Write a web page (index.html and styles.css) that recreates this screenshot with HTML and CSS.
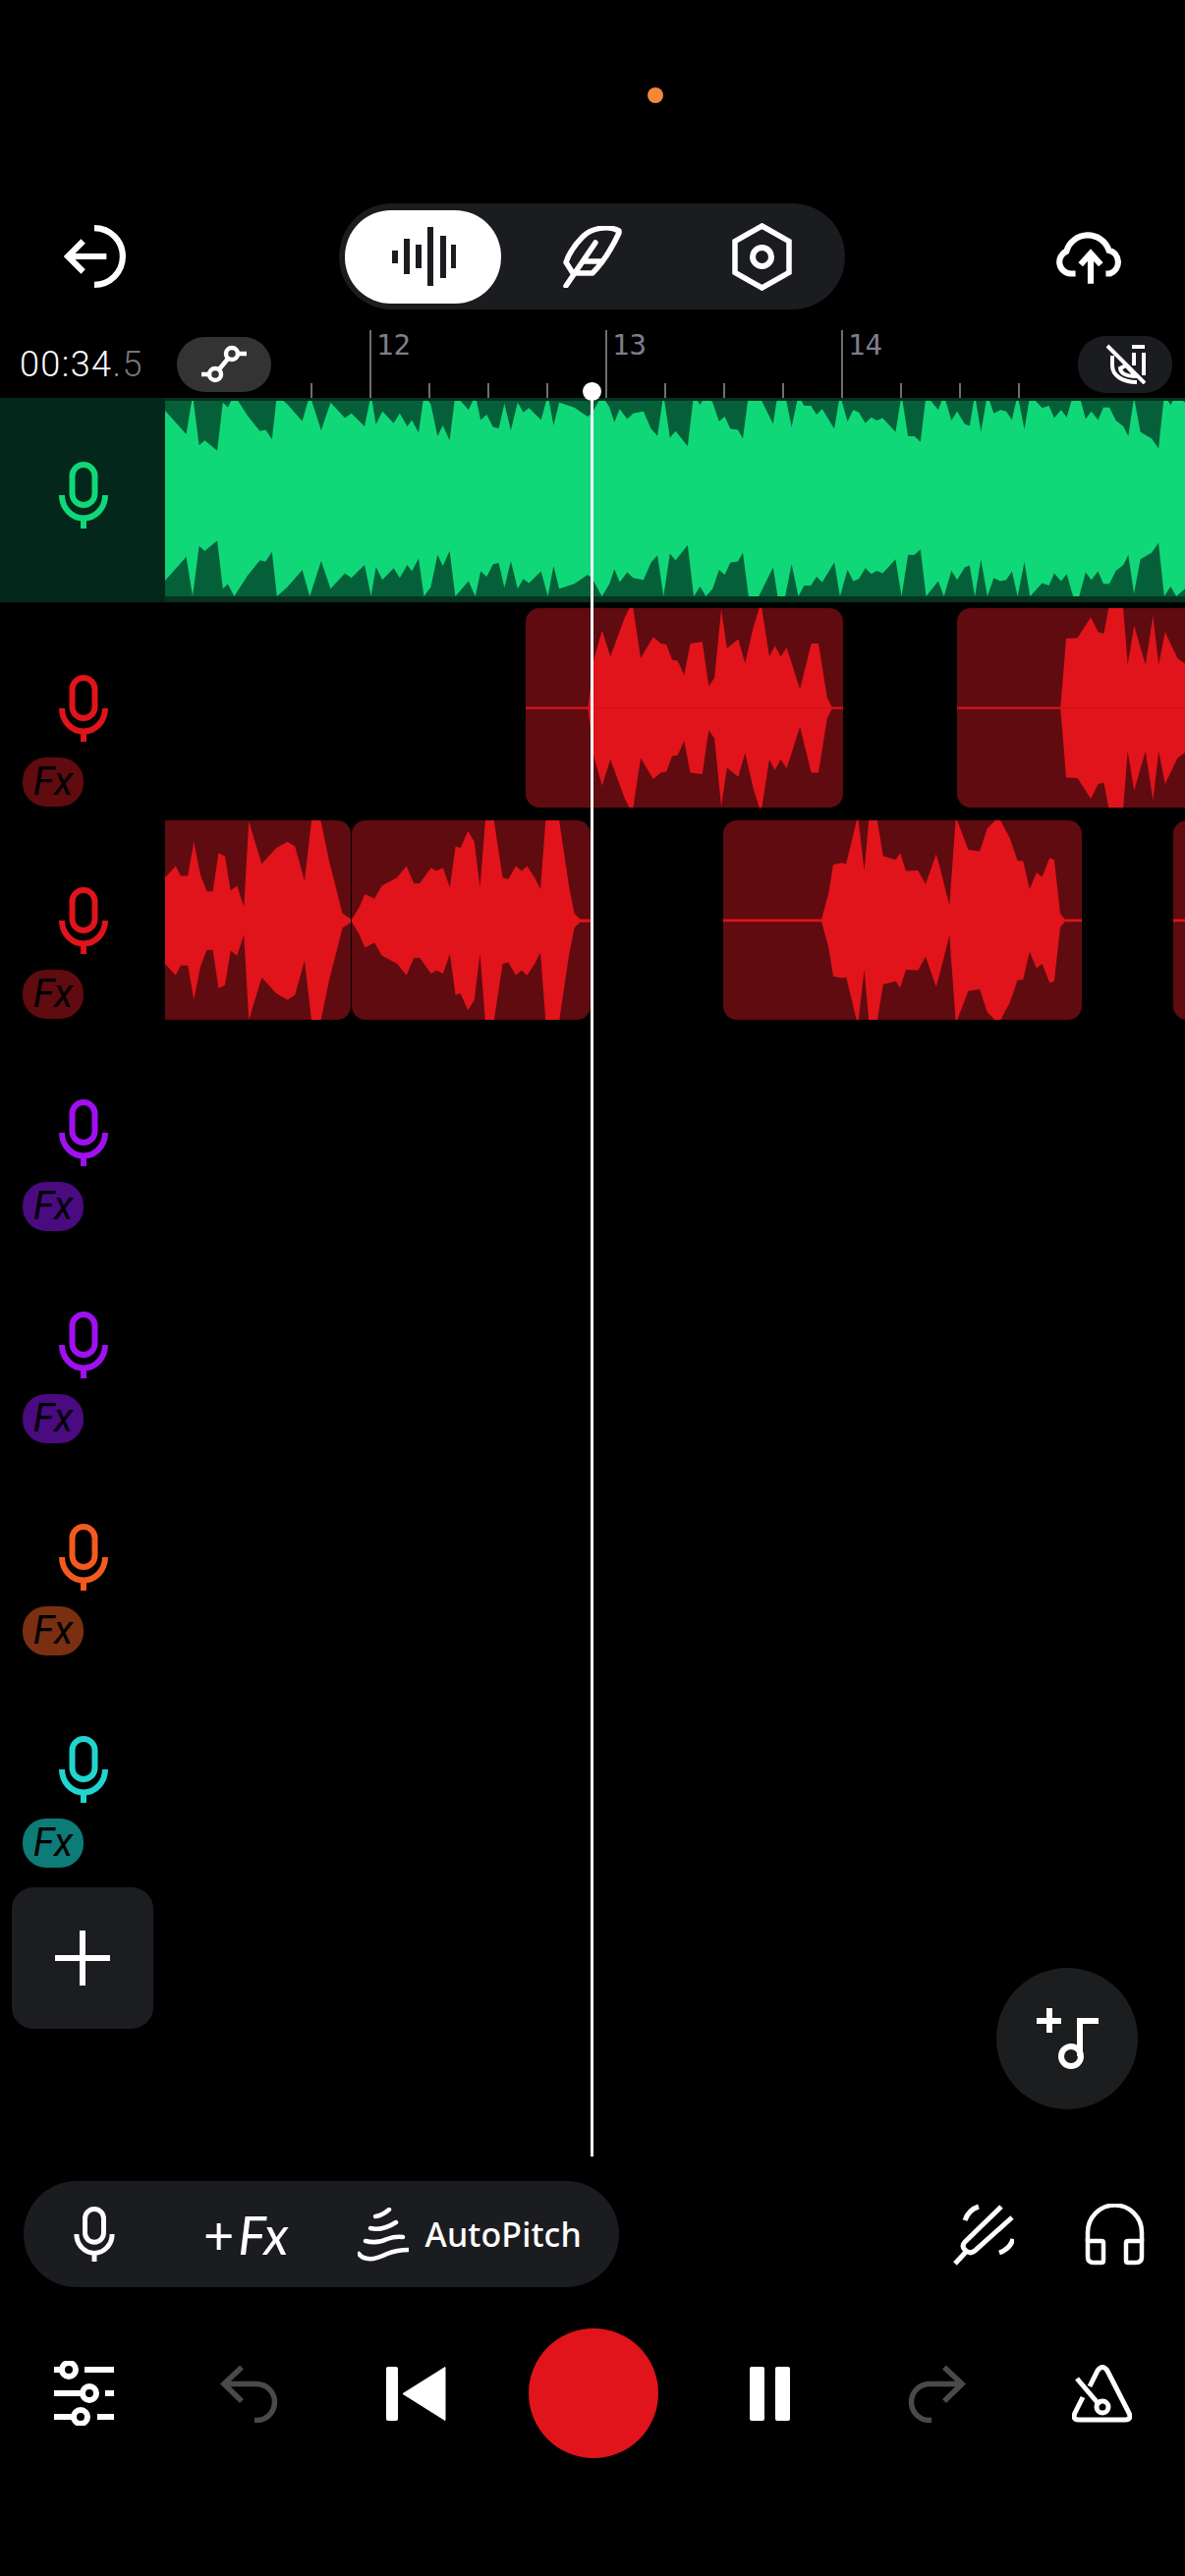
FILE: index.html
```html
<!DOCTYPE html>
<html lang="en">
<head>
    <meta charset="UTF-8">
    <meta name="viewport" content="width=device-width, initial-scale=1.0">
    <title>Recording studio</title>
    <link rel="stylesheet" href="styles.css">
</head>
<body>
    <!-- shared icons -->
    <svg class="defs" width="0" height="0">
        <symbol id="mic" viewBox="0 0 50 68">
            <rect x="13.500" y="3" width="23" height="41" rx="11.500" fill="none" stroke="currentColor" stroke-width="6"/>
            <path d="M3 34a22 23.500 0 0 0 44 0M25 58v10" fill="none" stroke="currentColor" stroke-width="6"/>
        </symbol>
        <symbol id="undo" viewBox="0 0 61 59">
            <path d="M4 19.500H37A18.500 18.500 0 0 1 37 56.500H35M22 2.500L4 19.500L22 37" fill="none" stroke="currentColor" stroke-width="5.500"/>
        </symbol>
    </svg>

    <div class="app">
        <div class="status"><span class="status-dot"></span></div>

        <div class="toolbar">
            <svg class="icon-back" viewBox="0 0 61 62">
                <path d="M30 3A28 28 0 0 1 30 59M42 31H4M19 16L4 31L19 46" fill="none" stroke="#fff" stroke-width="6"/>
            </svg>
            <div class="modes">
                <div class="mode mode-active">
                    <svg class="icon-bars" viewBox="0 0 66 60">
                        <path d="M4 24v13M16 12v36M28 18v24M40 0v60M53 9v43M64 18v24" stroke="#1b1c20" stroke-width="6"/>
                    </svg>
                </div>
                <div class="mode">
                    <svg class="icon-feather" viewBox="0 0 60 63">
                        <path d="M57 5C46-1 29 2 20 11C12 19 6 28 3 37L10 48H30C40 38 50 22 57 7ZM3 61L33 17M21 36H40" fill="none" stroke="#fff" stroke-width="5.500" stroke-linecap="round" stroke-linejoin="round"/>
                    </svg>
                </div>
                <div class="mode">
                    <svg class="icon-hex" viewBox="0 0 61 69">
                        <path d="M30.500 3L58 18.500V50.500L30.500 66L3 50.500V18.500Z" fill="none" stroke="#fff" stroke-width="5.500"/>
                        <circle cx="30.500" cy="34.500" r="9.500" fill="none" stroke="#fff" stroke-width="6"/>
                    </svg>
                </div>
            </div>
            <svg class="icon-cloud" viewBox="0 0 67 53">
                <path d="M19 43H14A11.500 11.500 0 0 1 10 21A22 22 0 0 1 52 20A12 12 0 0 1 53 43H49M34 53V23M24 34L34 23L44 34" fill="none" stroke="#fff" stroke-width="6"/>
            </svg>
        </div>

        <div class="ruler-row">
            <div class="time">00:34<span class="time-dot">.</span><span class="time-dim">5</span></div>
            <div class="chip chip-nodes">
                <svg class="icon-nodes" viewBox="0 0 46 40">
                    <circle cx="31" cy="9" r="6" fill="none" stroke="#fff" stroke-width="4.500"/>
                    <circle cx="14" cy="30" r="6" fill="none" stroke="#fff" stroke-width="4.500"/>
                    <path d="M37 9H46M0 30H8M18 25L27 14" fill="none" stroke="#fff" stroke-width="4.500"/>
                </svg>
            </div>
            <div class="ruler">
                <div class="tick"></div>
                <div class="tick tick-major"><span>12</span></div>
                <div class="tick"></div>
                <div class="tick"></div>
                <div class="tick"></div>
                <div class="tick tick-major"><span>13</span></div>
                <div class="tick"></div>
                <div class="tick"></div>
                <div class="tick"></div>
                <div class="tick tick-major"><span>14</span></div>
                <div class="tick"></div>
                <div class="tick"></div>
                <div class="tick"></div>
            </div>
            <div class="chip chip-magnet">
                <svg class="icon-magnet" viewBox="0 0 41 41">
                    <path d="M2 2L40 40M27 3H40M29 9V22M39 9V32M7 12V22C7 32 17 39 32 39M15 25C16 31 23 33 31 33L21 22Z" fill="none" stroke="#fff" stroke-width="4"/>
                </svg>
            </div>
        </div>

        <div class="timeline">
            <div class="track track-live">
                <div class="head head-live">
                    <svg class="mic mic-green"><use href="#mic"/></svg>
                </div>
                <div class="lane-live">
                    <svg class="wave" viewBox="437 40 2699 595" preserveAspectRatio="none">
                        <g id="greenWave">
                            <path d="M437 345V70L493 142L510 22L527 175L542 160L575 192L590 45L603 60L620 22L655 85L688 132L703 128L720 157L733 22L760 50L800 102L820 22L850 130L875 45L913 92L930 78L965 118L982 22L995 112L1012 72L1042 108L1058 78L1078 118L1090 98L1108 137L1122 22L1140 50L1158 148L1172 115L1190 160L1205 22L1240 68L1258 22L1272 98L1288 82L1305 120L1320 124L1335 48L1352 130L1370 45L1385 75L1400 62L1432 98L1450 22L1465 115L1480 45L1520 60L1555 88L1570 75V345Z"/>
                            <path transform="translate(1568 0)" d="M0 345V75L25 22L45 60L58 105L72 65L92 95L108 78L135 72L155 125L172 147L188 22L205 152L220 132L252 178L268 22L285 52L300 22L318 45L335 103L350 88L365 125L385 128L398 155L413 22L440 22L478 110L490 22L510 22L527 120L545 22L560 55L578 55L593 82L608 65L640 125L655 22L675 103L690 68L705 75L722 108L738 90L752 100L768 92L802 135L818 22L835 148L852 148L868 165L883 22L915 68L930 22L950 100L965 72L985 110L998 116L1012 22L1028 135L1045 22L1062 78L1080 68L1095 72L1110 98L1125 22L1143 127L1158 22L1190 62L1208 55L1222 92L1240 68L1255 90L1272 22L1288 22L1305 95L1320 72L1338 98L1352 60L1368 60L1385 100L1405 118L1418 148L1433 30L1450 135L1480 155L1498 185L1513 22L1530 52L1545 22L1568 45V345Z"/>
                        </g>
                        <use href="#greenWave" transform="matrix(1 0 0 -1 0 657)"/>
                    </svg>
                </div>
            </div>

            <div class="track">
                <div class="head">
                    <svg class="mic mic-red"><use href="#mic"/></svg>
                    <div class="fx fx-red">Fx</div>
                </div>
                <div class="lane">
                    <div class="clip" style="margin-left:367px;width:323px">
                        <svg class="wave" viewBox="-177 57 839 610" preserveAspectRatio="none">
                            <g id="clipA"><path d="M-177 363V359H-12L3 215L25 125L47 205L85 85L105 40L127 210L160 145L180 165L195 168L210 215L225 218L242 262L258 165L290 160L307 295L322 270L340 60L355 180L385 152L403 225L425 115L445 40L467 205L482 172L497 205L513 178L548 305L578 165L597 165L620 330L632 359H662V363Z"/></g>
                            <use href="#clipA" transform="matrix(1 0 0 -1 0 725)"/>
                        </svg>
                    </div>
                    <div class="clip" style="margin-left:116px;width:259px">
                        <svg class="wave" viewBox="966 57 674 610" preserveAspectRatio="none">
                            <g id="clipB"><path d="M966 363V359H1240L1255 150L1285 148L1320 85L1340 130L1355 135L1370 40L1405 40L1418 230L1435 110L1465 230L1485 80L1500 230L1517 130L1550 210L1568 225L1600 260L1640 300V363Z"/></g>
                            <use href="#clipB" transform="matrix(1 0 0 -1 0 725)"/>
                        </svg>
                    </div>
                </div>
            </div>

            <div class="track">
                <div class="head">
                    <svg class="mic mic-red"><use href="#mic"/></svg>
                    <div class="fx fx-red">Fx</div>
                </div>
                <div class="lane">
                    <div class="clip clip-cut" style="width:189px">
                        <svg class="wave" viewBox="437 705 490 610" preserveAspectRatio="none">
                            <g id="clipC"><path d="M437 1014V880L465 845L478 875L497 875L513 770L530 870L547 922L563 922L578 805L595 815L610 920L627 905L645 970L658 708L692 838L730 790L760 770L780 785L805 890L825 690L845 690L870 830L905 990L925 1005L927 1008V1014Z"/></g>
                            <use href="#clipC" transform="matrix(1 0 0 -1 0 2024)"/>
                        </svg>
                    </div>
                    <div class="clip" style="margin-left:1px;width:243px">
                        <svg class="wave" viewBox="930 705 633 610" preserveAspectRatio="none">
                            <g id="clipD"><path d="M930 1014V1008L950 970L965 930L990 945L1010 905L1050 880L1075 845L1095 898L1110 898L1140 850L1155 860L1172 850L1190 910L1205 785L1218 790L1238 738L1255 770L1270 910L1285 690L1305 690L1330 880L1345 885L1365 845L1380 860L1395 845L1415 880L1430 915L1445 690L1478 690L1505 900L1520 990L1535 1007H1563V1014Z"/></g>
                            <use href="#clipD" transform="matrix(1 0 0 -1 0 2024)"/>
                        </svg>
                    </div>
                    <div class="clip" style="margin-left:135px;width:365px">
                        <svg class="wave" viewBox="347 705 948 610" preserveAspectRatio="none">
                            <g id="clipE"><path d="M347 1013V1007H607L625 930L638 840L660 835L672 838L703 690L720 860L733 690L752 690L770 815L803 825L815 805L830 860L862 858L882 900L910 808L920 850L945 965L962 695L995 795L1025 800L1045 730L1075 695L1105 760L1125 828L1140 830L1157 915L1175 865L1190 878L1210 820L1222 825L1238 990L1250 1007H1295V1013Z"/></g>
                            <use href="#clipE" transform="matrix(1 0 0 -1 0 2022)"/>
                        </svg>
                    </div>
                    <div class="clip" style="margin-left:93px;width:60px">
                        <svg class="wave" viewBox="0 705 156 610" preserveAspectRatio="none">
                            <path d="M0 1007H156V1015H0Z"/>
                        </svg>
                    </div>
                </div>
            </div>

            <div class="track">
                <div class="head">
                    <svg class="mic mic-purple"><use href="#mic"/></svg>
                    <div class="fx fx-purple">Fx</div>
                </div>
            </div>
            <div class="track">
                <div class="head">
                    <svg class="mic mic-purple"><use href="#mic"/></svg>
                    <div class="fx fx-purple">Fx</div>
                </div>
            </div>
            <div class="track">
                <div class="head">
                    <svg class="mic mic-orange"><use href="#mic"/></svg>
                    <div class="fx fx-orange">Fx</div>
                </div>
            </div>
            <div class="track">
                <div class="head">
                    <svg class="mic mic-teal"><use href="#mic"/></svg>
                    <div class="fx fx-teal">Fx</div>
                </div>
            </div>

            <div class="add-track">
                <svg class="icon-plus" viewBox="0 0 56 56">
                    <path d="M0 28H56M28 0V56" stroke="#fff" stroke-width="6"/>
                </svg>
            </div>

            <div class="add-music">
                <svg class="icon-note" viewBox="0 0 63 62">
                    <path d="M0 13H25M13 0V25" stroke="#fff" stroke-width="6"/>
                    <path d="M63 13H44V49" fill="none" stroke="#fff" stroke-width="6"/>
                    <circle cx="35" cy="49" r="10" fill="none" stroke="#fff" stroke-width="6"/>
                </svg>
            </div>
        </div>

        <div class="input-row">
            <div class="input-pill">
                <svg class="mic mic-small"><use href="#mic"/></svg>
                <div class="add-fx"><span class="add-fx-plus">+</span>Fx</div>
                <svg class="icon-autopitch" viewBox="0 0 52 55">
                    <path d="M18 9Q25 8 32 2M13 21Q25 24 39 15M8 34Q20 37 30 32Q38 29 46 30M1 47C8 56 22 51 30 47Q40 43 52 43" fill="none" stroke="#fff" stroke-width="4.500" stroke-linecap="round"/>
                </svg>
                <span class="autopitch">AutoPitch</span>
            </div>
            <svg class="icon-fork" viewBox="0 0 62 63">
                <path d="M2 61L15 47M49 3L12 39Q8 43 12 47Q17 52 22 48L60 14M26 3Q16 6 12 17M61 36Q58 46 47 50" fill="none" stroke="#fff" stroke-width="5"/>
            </svg>
            <svg class="icon-phones" viewBox="0 0 61 63">
                <path d="M3 38V29A27.500 27.500 0 0 1 58 29V38" fill="none" stroke="#fff" stroke-width="4.500"/>
                <path d="M3 38H17Q19 38 19 40V58Q19 60 17 60H9Q3 60 3 54ZM58 38H44Q42 38 42 40V58Q42 60 44 60H52Q58 60 58 54Z" fill="none" stroke="#fff" stroke-width="4.500"/>
            </svg>
        </div>

        <div class="transport">
            <svg class="icon-sliders" viewBox="0 0 61 66">
                <g fill="none" stroke="#fff" stroke-width="6">
                    <path d="M0 9H8M31 9H61M0 33H29M52 33H61M0 57H20M44 57H61"/>
                    <circle cx="15" cy="9" r="7"/>
                    <circle cx="36" cy="33" r="7"/>
                    <circle cx="27" cy="57" r="7"/>
                </g>
            </svg>
            <svg class="icon-undo"><use href="#undo"/></svg>
            <svg class="icon-prev" viewBox="0 0 61 55">
                <rect width="12" height="55" rx="2" fill="#fff"/>
                <path d="M17 27.500L60 0.500V54.500Z" fill="#fff" stroke="#fff" stroke-linejoin="round"/>
            </svg>
            <div class="record"></div>
            <svg class="icon-pause" viewBox="0 0 41 55">
                <rect width="15" height="55" rx="2" fill="#fff"/>
                <rect x="26" width="15" height="55" rx="2" fill="#fff"/>
            </svg>
            <svg class="icon-undo icon-redo"><use href="#undo"/></svg>
            <svg class="icon-metronome" viewBox="0 0 61 59">
                <path d="M11 33L3 49Q0 56 7 56H54Q61 56 58 49L36 6Q31-1 26 6L18 22M5 14L28 41" fill="none" stroke="#fff" stroke-width="5"/>
                <circle cx="31" cy="43" r="6" fill="none" stroke="#fff" stroke-width="5"/>
            </svg>
        </div>

        <div class="playhead"></div>
    </div>
</body>
</html>
```

FILE: styles.css
```css
* {
    box-sizing: border-box;
}

body {
    margin: 0;
    background: #000;
    font-family: Roboto, Arial, sans-serif;
    color: #fff;
}

svg {
    display: block;
    flex: none;
}

.defs {
    position: absolute;
}

.app {
    position: relative;
    width: 1206px;
    height: 2622px;
    overflow: hidden;
    background: #000;
}

.status {
    height: 207px;
    padding: 89px 0 0 659px;
}

.status-dot {
    display: block;
    width: 16px;
    height: 16px;
    border-radius: 50%;
    background: #f5873a;
}

/* top bar */
.toolbar {
    display: flex;
    align-items: center;
    justify-content: space-between;
    height: 108px;
    padding: 0 62px 0 65px;
}

.icon-back {
    width: 63px;
    height: 64px;
}

.modes {
    display: flex;
    align-items: center;
    width: 515px;
    height: 108px;
    margin-left: 2px;
    padding-left: 6px;
    background: #1b1c20;
    border-radius: 54px;
}

.mode {
    display: flex;
    align-items: center;
    justify-content: center;
    width: 159px;
    height: 95px;
}

.mode-active {
    background: #fff;
    border-radius: 47px;
}

.icon-bars {
    width: 66px;
    height: 60px;
}

.icon-feather {
    width: 60px;
    height: 63px;
    margin-left: 27px;
}

.icon-hex {
    width: 61px;
    height: 69px;
    margin-left: 28px;
}

.mode:nth-child(3) {
    width: 185px;
}

.icon-cloud {
    width: 69px;
    height: 55px;
}

/* ruler row */
.ruler-row {
    display: flex;
    align-items: center;
    height: 90px;
    padding-top: 21px;
}

.time {
    flex: none;
    width: 180px;
    padding-left: 20px;
    font-size: 36px;
    font-weight: 300;
    letter-spacing: 1.4px;
}

.time-dot {
    color: #999;
}

.time-dim {
    color: #777;
}

.chip {
    display: flex;
    align-items: center;
    justify-content: center;
    flex: none;
    width: 96px;
    border-radius: 28px;
}

.chip-nodes {
    height: 56px;
    background: #333;
}

.icon-nodes {
    width: 46px;
    height: 40px;
}

.chip-magnet {
    height: 58px;
    margin-left: auto;
    margin-right: 13px;
    background: #1b1c20;
}

.icon-magnet {
    width: 41px;
    height: 41px;
}

.ruler {
    display: flex;
    align-items: flex-end;
    align-self: stretch;
    margin-left: 40px;
}

.tick {
    flex: none;
    width: 60px;
    height: 15px;
    border-left: 2px solid #6e6e6e;
}

.tick-major {
    height: 69px;
    padding-left: 5px;
    color: #7e7e8c;
    font-family: "DejaVu Sans Mono", monospace;
    font-size: 29px;
    line-height: 30px;
}

/* tracks */
.timeline {
    position: relative;
    height: 1815px;
}

.track {
    display: flex;
    height: 216px;
}

.track-live {
    height: 208px;
    margin-bottom: 3px;
    background: #07321f;
}

.head {
    display: flex;
    flex-direction: column;
    flex: none;
    width: 168px;
    padding: 71px 0 0 23px;
}

.head-live {
    padding-top: 65px;
    background: #03271a;
}

.mic {
    width: 50px;
    height: 68px;
    margin-left: 37px;
}

.mic-green { color: #10d878; }
.mic-red { color: #e0141a; }
.mic-purple { color: #a010f0; }
.mic-orange { color: #f25a20; }
.mic-teal { color: #20d5cf; }

.fx {
    width: 62px;
    height: 50px;
    margin-top: 16px;
    border-radius: 24px;
    color: #000;
    font-size: 40px;
    font-style: italic;
    font-weight: 400;
    line-height: 50px;
    text-align: center;
}

.fx-red { background: #5f0b10; }
.fx-purple { background: #4a0a80; }
.fx-orange { background: #7a3010; }
.fx-teal { background: #0d7c78; }

.lane-live {
    flex: 1;
    padding: 3px 0 6px;
}

.lane-live .wave {
    background: #05603a;
    fill: #10d878;
}

.lane {
    display: flex;
    flex: 1;
    overflow: hidden;
    padding-top: 3px;
    height: 206px;
}

.clip {
    flex: none;
    height: 203px;
    overflow: hidden;
    background: #5f0b10;
    border-radius: 14px;
}

.clip-cut {
    border-radius: 0 14px 14px 0;
}

.wave {
    width: 100%;
    height: 100%;
    fill: #e0141a;
}

.add-track {
    display: flex;
    align-items: center;
    justify-content: center;
    width: 144px;
    height: 144px;
    margin: 9px 0 0 12px;
    background: #1c1d20;
    border-radius: 22px;
}

.icon-plus {
    width: 56px;
    height: 56px;
}

.add-music {
    position: absolute;
    top: 1598px;
    right: 48px;
    display: flex;
    align-items: center;
    justify-content: center;
    width: 144px;
    height: 144px;
    background: #1b1d1f;
    border-radius: 50%;
}

.icon-note {
    width: 63px;
    height: 62px;
}

/* input controls */
.input-row {
    display: flex;
    align-items: center;
    height: 108px;
    padding: 0 41px 0 24px;
}

.input-pill {
    display: flex;
    align-items: center;
    width: 606px;
    height: 108px;
    padding-left: 51px;
    background: #1b1c20;
    border-radius: 54px;
}

.mic-small {
    width: 42px;
    height: 56px;
    margin-left: 0;
    color: #fff;
}

.add-fx {
    display: flex;
    align-items: baseline;
    margin-left: 90px;
    font-family: Lato, sans-serif;
    font-size: 54px;
    font-style: italic;
    font-weight: 400;
}

.add-fx-plus {
    margin-right: 4px;
    font-style: normal;
    font-weight: 400;
}

.icon-autopitch {
    width: 52px;
    height: 55px;
    margin-left: 70px;
}

.autopitch {
    margin-left: 17px;
    font-family: "Noto Sans", sans-serif;
    font-size: 34px;
    font-weight: 500;
    letter-spacing: 0.1px;
}

.icon-fork {
    width: 62px;
    height: 63px;
    margin-left: auto;
}

.icon-phones {
    width: 61px;
    height: 63px;
    margin-left: 72px;
}

/* transport */
.transport {
    display: grid;
    grid-template-columns: 170px 169px 169px 191px 168px 170px 169px;
    justify-items: center;
    align-items: center;
    height: 132px;
    margin-top: 42px;
}

.icon-sliders {
    width: 61px;
    height: 66px;
}

.icon-undo {
    width: 61px;
    height: 59px;
    color: #4a4a4a;
}

.icon-redo {
    transform: scaleX(-1);
}

.icon-prev {
    width: 61px;
    height: 55px;
}

.record {
    width: 132px;
    height: 132px;
    background: #e0141a;
    border-radius: 50%;
}

.icon-pause {
    width: 41px;
    height: 55px;
}

.icon-metronome {
    width: 61px;
    height: 59px;
}

/* playhead sits over the ruler and all tracks */
.playhead {
    position: absolute;
    top: 398px;
    left: 601px;
    width: 3px;
    height: 1797px;
    background: #fff;
}

.playhead::before {
    content: '';
    position: absolute;
    top: -9px;
    left: -8px;
    width: 19px;
    height: 19px;
    background: #fff;
    border-radius: 50%;
}
```
